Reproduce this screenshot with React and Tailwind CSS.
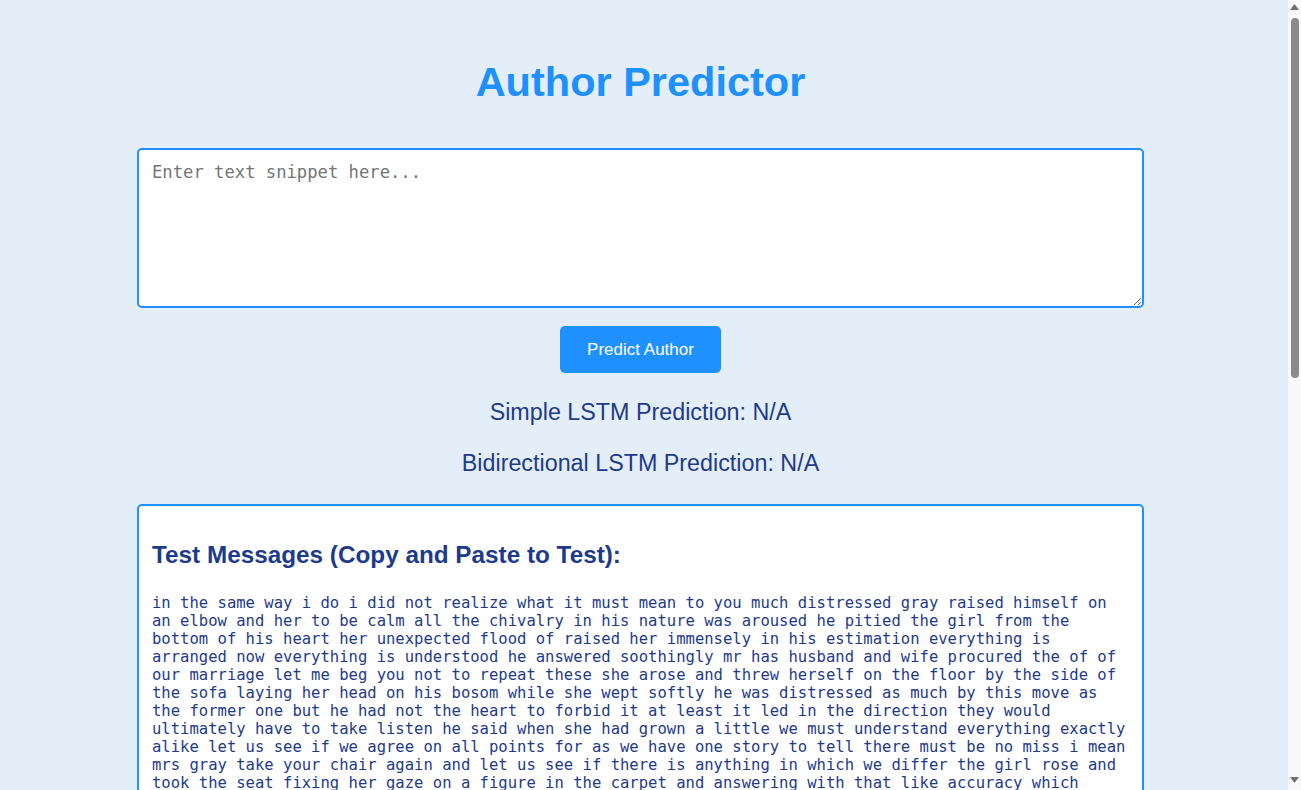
import { useState } from "react";

const SAMPLE_TEXT = [
  "in the same way i do i did not realize what it must mean to you much distressed gray raised himself on an elbow and her to be calm all the chivalry in his nature was aroused he pitied the girl from the bottom of his heart her unexpected flood of raised her immensely in his estimation everything is arranged now everything is understood he answered soothingly mr has husband and wife procured the of of our marriage let me beg you not to repeat these she arose and threw herself on the floor by the side of the sofa laying her head on his bosom while she wept softly he was distressed as much by this move as the former one but he had not the heart to forbid it at least it led in the direction they would ultimately have to take listen he said when she had grown a little we must understand everything exactly alike let us see if we agree on all points for as we have one story to tell there must be no miss i mean mrs gray take your chair again and let us see if there is anything in which we differ the girl rose and took the seat fixing her gaze on a figure in the carpet and answering with that like accuracy which showed how deeply the words had gone home to her she went over the whole of it once more from the beginning to the end and he listened without a word until she had quite done then he said gently that is all true and it is all as it should be you need not be afraid of anything now",
  "the old man sat by the fire with his hands folded upon his knees and his eyes fixed upon the glowing coals he had been sitting so for an hour or more and the candle at his elbow had burned down almost to the socket without his noticing it at last the door opened softly and his daughter came in with a shawl over her shoulders and a lamp in her hand father she said it is very late and you ought to be in bed long ago he looked up at her with a smile and shook his head i could not sleep my dear he answered i have been thinking of the days when your mother was alive and we lived in the little house by the river do you remember it she set the lamp upon the table and knelt down beside him yes she said i remember it very well",
  "it was a bright morning in the early part of the summer and the whole village was astir before the sun had fairly risen above the hills the farmers were going out to their fields and the women were busy at their doors and in their gardens and the children were running about in the lanes with their dogs at their heels nobody had any thought of what the day was to bring forth and when the stranger rode in at the end of the street upon a tired horse covered with dust there was hardly a soul who gave him more than a passing glance he drew rein before the inn and sat for a moment looking about him as if he were uncertain whether to stop or to go on then he got down slowly and led his horse round to the yard",
];

function Scrollbar() {
  return (
    <div className="flex h-full w-[13px] shrink-0 flex-col items-center bg-[#f9f9f9]">
      <svg width="9" height="6" viewBox="0 0 9 6" className="mt-[4px] shrink-0">
        <path d="M4.5 0L9 6H0z" fill="#707070" />
      </svg>
      <div className="mt-[8px] h-[360px] w-[8px] shrink-0 rounded-[4px] bg-[#8b8b8b]" />
      <div className="flex-1" />
      <svg width="9" height="6" viewBox="0 0 9 6" className="mb-[7px] shrink-0">
        <path d="M0 0H9L4.5 6z" fill="#707070" />
      </svg>
    </div>
  );
}

export default function App() {
  const [text, setText] = useState("");
  const [simple] = useState("N/A");
  const [bidirectional] = useState("N/A");

  return (
    <div className="flex h-screen overflow-hidden bg-[#e4eef9] font-['Liberation_Sans',Arial,sans-serif]">
      <div className="min-w-0 flex-1 overflow-hidden pr-[7px] pb-[20px]">
        <div className="mx-auto flex w-[1007px] flex-col items-center">
          <h1 className="mt-[58px] text-[41.5px] font-bold leading-[48px] text-[#1e90ff]">
            Author Predictor
          </h1>

          <textarea
            value={text}
            onChange={(e) => setText(e.target.value)}
            placeholder="Enter text snippet here..."
            className="mt-[42px] block h-[160px] w-full shrink-0 rounded-[5px] border-2 border-[#1e90ff] bg-white px-[13px] py-[12px] font-['DejaVu_Sans_Mono',monospace] text-[17.2px] leading-[20px] text-black outline-none placeholder:text-[#757575]"
          />

          <button
            type="button"
            className="mt-[18px] h-[47px] w-[161px] shrink-0 rounded-[5px] bg-[#1e90ff] text-[17px] text-white"
          >
            Predict Author
          </button>

          <p className="mt-[25px] text-[23.3px] leading-[28px] text-[#1e3a8a]">
            Simple LSTM Prediction: {simple}
          </p>
          <p className="mt-[23px] text-[23.3px] leading-[28px] text-[#1e3a8a]">
            Bidirectional LSTM Prediction: {bidirectional}
          </p>

          {/* sample snippets */}
          <div className="mt-[27px] w-full shrink-0 rounded-[5px] border-2 border-[#1e90ff] bg-white pt-[35px] pr-[15px] pb-[20px] pl-[13px]">
            <h3 className="text-[24.3px] font-bold leading-[28px] text-[#1e3a8a]">
              Test Messages (Copy and Paste to Test):
            </h3>
            <div className="mt-[25px] flex flex-col gap-[18px]">
              {SAMPLE_TEXT.map((t, i) => (
                <pre
                  key={i}
                  className="whitespace-pre-wrap font-['DejaVu_Sans_Mono',monospace] text-[15.55px] leading-[18px] text-[#1e3a8a]"
                >
                  {t}
                </pre>
              ))}
            </div>
          </div>
        </div>
      </div>
      <Scrollbar />
    </div>
  );
}
